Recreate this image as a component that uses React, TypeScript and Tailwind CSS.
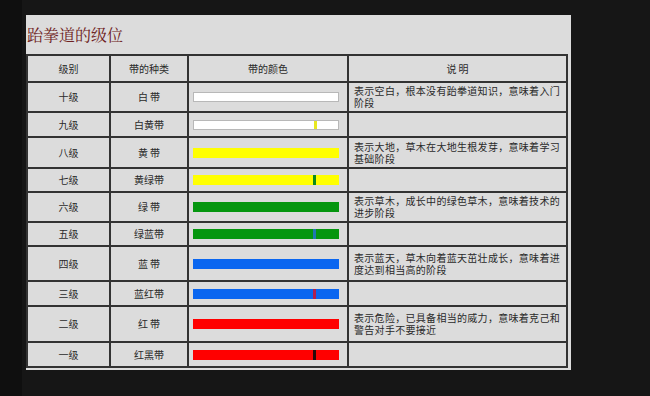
import React from "react";

type Row = {
  level: string;
  belt: string;
  color: string;
  border?: boolean;
  marker?: string;
  desc?: [string, string];
  h: string;
};

const rows: Row[] = [
  { level: "十级", belt: "白 带", color: "#ffffff", border: true, desc: ["表示空白，根本没有跆拳道知识，意味着入门", "阶段"], h: "h-[30px]" },
  { level: "九级", belt: "白黄带", color: "#ffffff", border: true, marker: "#e8e820", h: "h-[25px]" },
  { level: "八级", belt: "黄 带", color: "#ffff00", desc: ["表示大地，草木在大地生根发芽，意味着学习", "基础阶段"], h: "h-[31px]" },
  { level: "七级", belt: "黄绿带", color: "#ffff00", marker: "#0a8a1a", h: "h-[24px]" },
  { level: "六级", belt: "绿 带", color: "#05960f", desc: ["表示草木，成长中的绿色草木，意味着技术的", "进步阶段"], h: "h-[30px]" },
  { level: "五级", belt: "绿蓝带", color: "#05960f", marker: "#1f78b0", h: "h-[24px]" },
  { level: "四级", belt: "蓝 带", color: "#0a66f0", desc: ["表示蓝天，草木向着蓝天茁壮成长，意味着进", "度达到相当高的阶段"], h: "h-[35px]" },
  { level: "三级", belt: "蓝红带", color: "#0a66f0", marker: "#b02050", h: "h-[25px]" },
  { level: "二级", belt: "红 带", color: "#ff0000", desc: ["表示危险，已具备相当的威力，意味着克己和", "警告对手不要接近"], h: "h-[36px]" },
  { level: "一级", belt: "红黑带", color: "#ff0000", marker: "#2a0a0a", h: "h-[23px]" },
];

const font = { fontFamily: '"Noto Sans CJK SC", "Noto Sans", sans-serif' };

export default function App() {
  return (
    <div className="w-[650px] h-[396px] bg-[#161616] overflow-hidden flex" style={font}>
      <div className="w-[22px] h-full bg-[#0f0f0f]" />
      <div className="ml-[4px] mt-[15px] w-[545px] h-[355px] bg-[#dcdcdc] flex flex-col">
        <div
          className="h-[39px] flex items-center pl-[1px] text-[16px] text-[#6e2121] leading-none"
          style={{ fontFamily: '"Noto Serif CJK SC", "Noto Sans CJK SC", serif' }}
        >
          跆拳道的级位
        </div>
        <div className="w-[542px] border-2 border-[#333333] flex flex-col text-[10px] text-[#2a2a2a] leading-[12px]">
          <div className="h-[27px] flex border-b-2 border-[#333333]">
            <div className="w-[83px] border-r-2 border-[#333333] flex items-center justify-center">级别</div>
            <div className="w-[78px] border-r-2 border-[#333333] flex items-center justify-center">带的种类</div>
            <div className="w-[160px] border-r-2 border-[#333333] flex items-center justify-center">带的颜色</div>
            <div className="flex-1 flex items-center justify-center">说 明</div>
          </div>
          {rows.map((r, i) => (
            <div
              key={r.level}
              className={`${r.h} flex ${i < rows.length - 1 ? "border-b-2 border-[#333333]" : ""}`}
            >
              <div className="w-[83px] border-r-2 border-[#333333] flex items-center justify-center">{r.level}</div>
              <div className="w-[78px] border-r-2 border-[#333333] flex items-center justify-center whitespace-pre">{r.belt}</div>
              <div className="w-[160px] border-r-2 border-[#333333] flex items-center pl-[4px]">
                <div
                  className={`relative w-[146px] h-[10px] ${r.border ? "border border-[#b8b8b8]" : ""}`}
                  style={{ backgroundColor: r.color }}
                >
                  {r.marker && (
                    <div
                      className="absolute left-[120px] top-0 w-[3px] h-full"
                      style={{ backgroundColor: r.marker }}
                    />
                  )}
                </div>
              </div>
              <div className="flex-1 flex flex-col justify-center pl-[5px] tracking-[0.3px] whitespace-nowrap">
                {r.desc && (
                  <>
                    <span>{r.desc[0]}</span>
                    <span>{r.desc[1]}</span>
                  </>
                )}
              </div>
            </div>
          ))}
        </div>
      </div>
    </div>
  );
}
